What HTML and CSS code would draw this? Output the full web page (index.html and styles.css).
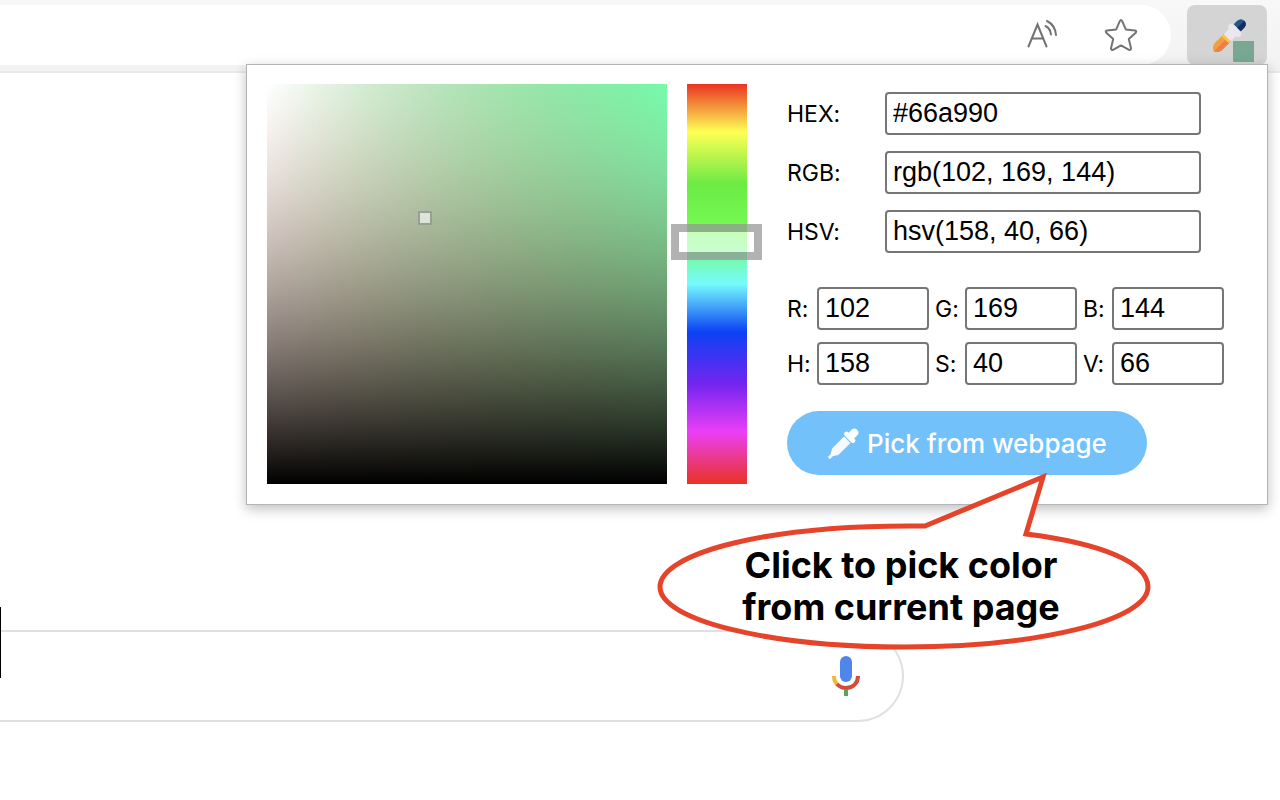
FILE: index.html
```
<!DOCTYPE html>
<html lang="en">
<head>
  <meta charset="UTF-8">
  <meta name="viewport" content="width=device-width, initial-scale=1.0">
  <title>Color Picker</title>
  <link rel="stylesheet" href="styles.css">
</head>
<body>
  <header class="toolbar">
    <div class="address-bar">
      <button class="icon-btn" type="button" aria-label="Read aloud">
        <svg width="34" height="34" viewBox="0 0 34 34" fill="none" stroke="#737373" stroke-width="2" stroke-linecap="round">
          <path d="M4.500 28.500 L13.500 6.500 L22.500 28.500 M8 20.500 H19"/>
          <path d="M21.500 8 C24.500 9.500 26.500 12.500 27 16.500"/>
          <path d="M23 3 C28 5.500 31.500 11 32 17"/>
        </svg>
      </button>
      <button class="icon-btn" type="button" aria-label="Add to favorites">
        <svg width="34" height="34" viewBox="0 0 34 34" fill="none" stroke="#737373" stroke-width="2" stroke-linejoin="round">
          <path d="M15.800 3.200 Q17 1 18.200 3.200 L21.800 11.400 L31 12.400 Q33 13 31.700 14.800 L24.800 21 L27 30.200 Q27 32.400 25 31.800 L17 27.400 L9 31.800 Q7 32.400 7 30.200 L9.200 21 L2.300 14.800 Q1 13 3 12.400 L12.200 11.400 Z"/>
        </svg>
      </button>
    </div>
    <button class="extension-btn" type="button" aria-label="Color Picker">
      <svg width="44" height="44" viewBox="0 0 44 44">
        <g transform="rotate(45 18 18)">
          <path d="M13 18 H23 V32 Q22 37 18 38 Q14 37 13 32 Z" fill="#f0a03c"/>
          <path d="M18 20 H23 V32 Q22 37 18 38 Z" fill="#ee7f4b"/>
          <path d="M13 17 H23 V22 H13 Z" fill="#fbc63d"/>
          <path d="M13 19 V12 Q9.500 11 10 7.500 Q11 5 14 5 H22 Q25 5 26 7.500 Q26.500 11 23 12 V19 Z" fill="#ece6ef"/>
          <path d="M13 5 V0 Q13.500 -5 18 -5 Q22.500 -5 23 0 V5 Z" fill="#24568c"/>
          <path d="M18 -5 Q22.500 -5 23 0 V5 H18 Z" fill="#12305f"/>
        </g>
        <rect x="23" y="22" width="22" height="21" rx="1" fill="#78a893"/>
      </svg>
    </button>
  </header>

  <main class="page">
    <form class="search-box">
      <input class="search-input" type="text" aria-label="Search">
      <button class="mic-btn" type="button" aria-label="Search by voice">
        <svg width="28" height="40" viewBox="0 0 28 40" fill="none">
          <rect x="8" y="0" width="12" height="26" rx="6" fill="#4f86ec"/>
          <path d="M2 20 Q2 26 6 29" stroke="#f2b63c" stroke-width="4"/>
          <path d="M5 28 Q8.500 32 14 32 C21 32 26 27 26 20" stroke="#d54c3f" stroke-width="4"/>
          <path d="M14 34 V40" stroke="#58a55c" stroke-width="4"/>
        </svg>
      </button>
    </form>
    <span class="caret"></span>
  </main>

  <section class="popup">
    <div class="sv-picker">
      <svg class="sv-field" viewBox="0 0 400 400">
        <defs>
          <linearGradient id="gradient-black" x1="0" y1="1" x2="0" y2="0">
            <stop offset="0" stop-color="#000" stop-opacity="1"/>
            <stop offset="1" stop-color="#cc9a81" stop-opacity="0"/>
          </linearGradient>
          <linearGradient id="gradient-white" x1="0" y1="0" x2="1" y2="0">
            <stop offset="0" stop-color="#fff" stop-opacity="1"/>
            <stop offset="1" stop-color="#cc9a81" stop-opacity="0"/>
          </linearGradient>
        </defs>
        <rect width="400" height="400" fill="#75fbaa"/>
        <rect width="400" height="400" fill="url(#gradient-white)"/>
        <rect width="400" height="400" fill="url(#gradient-black)"/>
      </svg>
      <span class="sv-cursor"></span>
    </div>
    <div class="hue-slider">
      <span class="hue-cursor"></span>
    </div>

    <div class="controls">
      <div class="color-text">
        <label for="hex">HEX:</label>
        <input type="text" id="hex" value="#66a990">
        <label for="rgb">RGB:</label>
        <input type="text" id="rgb" value="rgb(102, 169, 144)">
        <label for="hsv">HSV:</label>
        <input type="text" id="hsv" value="hsv(158, 40, 66)">
      </div>
      <div class="channels">
        <label for="r">R:</label>
        <input type="text" id="r" value="102">
        <label for="g">G:</label>
        <input type="text" id="g" value="169">
        <label for="b">B:</label>
        <input type="text" id="b" value="144">
        <label for="h">H:</label>
        <input type="text" id="h" value="158">
        <label for="s">S:</label>
        <input type="text" id="s" value="40">
        <label for="v">V:</label>
        <input type="text" id="v" value="66">
      </div>
      <button class="pick-btn" type="button">
        <svg width="32" height="32" viewBox="0 0 32 32" fill="#fff">
          <g transform="rotate(45 16 16)">
            <path d="M11.500 10 H20.500 V27 L17.500 32 V36 H14.500 V32 L11.500 27 Z" opacity="0.92"/>
            <rect x="9" y="4" width="14" height="5" rx="2.500"/>
            <rect x="12" y="-4" width="8" height="10" rx="4"/>
          </g>
        </svg>
        Pick from webpage
      </button>
    </div>
  </section>

  <div class="callout">
    <svg class="callout-shape" viewBox="0 0 496 178">
      <path d="M268 53 L386 4 L369 61 C442 70 491 89 491 114 C491 147 382 174 247 174 C112 174 3 147 3 114 C3 80 112 51 268 53 Z" fill="#fff" stroke="#e5432a" stroke-width="5"/>
    </svg>
    <p class="callout-text">Click to pick color<br>from current page</p>
  </div>
</body>
</html>
```
FILE: styles.css
```
* {
  box-sizing: border-box;
}

body {
  margin: 0;
  min-height: 100vh;
  position: relative;
  overflow-x: hidden;
  background-color: #fff;
  color: #000;
  font-family: Inter, "Liberation Sans", sans-serif;
  font-variant-ligatures: no-contextual;
}

button {
  border: none;
  background: none;
  padding: 0;
  cursor: pointer;
}

svg {
  display: block;
}

/* browser toolbar */
.toolbar {
  display: flex;
  align-items: center;
  gap: 16px;
  height: 73px;
  padding: 0 13px 1px 0;
  background: linear-gradient(#f8f8f8, #f2f2f2);
  border-bottom: 2px solid #e9e9e9;
}

.address-bar {
  flex: 1;
  display: flex;
  align-items: center;
  justify-content: flex-end;
  gap: 46px;
  height: 60px;
  padding-right: 33px;
  background-color: #fff;
  border-radius: 0 30px 30px 0;
}

.extension-btn {
  display: flex;
  justify-content: flex-end;
  width: 80px;
  height: 60px;
  padding: 14px 13px 0 0;
  background-color: #d4d4d4;
  border-radius: 8px;
}

/* page behind the popup */
.page {
  position: relative;
  padding-top: 557px;
}

.search-box {
  display: flex;
  align-items: center;
  width: 904px;
  max-width: 100%;
  height: 92px;
  padding-right: 42px;
  border: 2px solid #dfe0e3;
  border-left: none;
  border-radius: 0 46px 46px 0;
}

.search-input {
  flex: 1;
  height: 60px;
  border: none;
  outline: none;
  font-size: 27px;
}

.caret {
  position: absolute;
  left: 0;
  top: 534px;
  width: 1px;
  height: 71px;
  background-color: #000;
}

/* popup */
.popup {
  position: absolute;
  top: 64px;
  right: 12px;
  display: flex;
  width: 1022px;
  padding: 19px 20px 20px;
  background-color: #fff;
  border: 1px solid #b4b4b4;
  box-shadow: 0 4px 12px rgba(0, 0, 0, 0.25);
}

.sv-picker {
  position: relative;
  width: 400px;
  height: 400px;
}

.sv-field {
  width: 100%;
  height: 100%;
}

.sv-cursor,
.hue-cursor {
  position: absolute;
  border: 2px solid rgba(0, 0, 0, 0.3);
  background-color: rgba(255, 255, 255, 0.6);
}

.sv-cursor {
  left: 151px;
  top: 127px;
  width: 14px;
  height: 14px;
}

.hue-slider {
  position: relative;
  width: 60px;
  height: 400px;
  margin-left: 20px;
  background: linear-gradient(#ea3323 0%, #ffff54 12%, #6ceb45 25%, #75fb54 37%, #75fbfd 50%, #0b41f5 62%, #7325f0 75%, #ea3ff7 87%, #ea3323 100%);
}

.hue-cursor {
  left: -16px;
  top: 140px;
  width: 91px;
  height: 36px;
  border-width: 8px;
}

.controls {
  margin-left: 40px;
  padding-top: 8px;
  font-size: 23px;
}

.controls input {
  width: 100%;
  height: 43px;
  padding: 0 6px;
  border: 2px solid #767676;
  border-radius: 4px;
  background-color: #fff;
  color: #000;
  font-family: "Liberation Sans", Arial, sans-serif;
  font-size: 27px;
}

.color-text {
  display: grid;
  grid-template-columns: 98px 316px;
  align-items: center;
  row-gap: 16px;
}

.channels {
  display: grid;
  grid-template-columns: 30px 112px 36px 112px 35px 112px;
  align-items: center;
  row-gap: 12px;
  margin-top: 34px;
}

.channels label {
  padding-left: 6px;
}

.channels label:nth-of-type(3n + 1) {
  padding-left: 0;
}

.pick-btn {
  display: flex;
  align-items: center;
  justify-content: center;
  gap: 8px;
  width: 360px;
  height: 64px;
  margin-top: 26px;
  padding-top: 1px;
  border-radius: 32px;
  background-color: #72c1fb;
  color: #fff;
  font-family: inherit;
  font-size: 26px;
  font-weight: 500;
}

/* speech bubble */
.callout {
  position: absolute;
  top: 473px;
  right: 127px;
  width: 496px;
  height: 178px;
}

.callout-text {
  position: absolute;
  left: 0;
  right: 8px;
  top: 71px;
  margin: 0;
  text-align: center;
  font-size: 36px;
  font-weight: 700;
  line-height: 42px;
}
```
